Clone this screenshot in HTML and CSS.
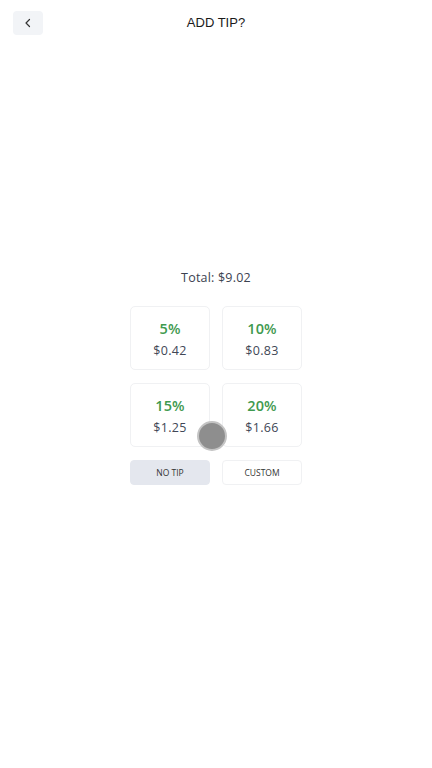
FILE: index.html
```html
<!DOCTYPE html>
<html>
<head>
<meta charset="utf-8">
<link rel="stylesheet" href="styles.css">
</head>
<body>
<header class="topbar">
  <button class="back" aria-label="Back">
    <svg width="10" height="10" viewBox="0 0 10 10"><path d="M6.5 1.5 L3 5 L6.5 8.5" fill="none" stroke="#333" stroke-width="1.2" stroke-linecap="round" stroke-linejoin="round"/></svg>
  </button>
  <h1 class="title">ADD TIP?</h1>
</header>
<main class="content">
  <p class="total">Total: $9.02</p>
  <div class="grid">
    <div class="card"><span class="pct">5%</span><span class="amt">$0.42</span></div>
    <div class="card"><span class="pct">10%</span><span class="amt">$0.83</span></div>
    <div class="card"><span class="pct">15%</span><span class="amt">$1.25</span></div>
    <div class="card"><span class="pct">20%</span><span class="amt">$1.66</span></div>
    <button class="btn btn-notip">NO TIP</button>
    <button class="btn btn-custom">CUSTOM</button>
  </div>
  <div class="touch"></div>
</main>
</body>
</html>
```
FILE: styles.css
```css
* { box-sizing: border-box; }
html, body { margin: 0; padding: 0; background: #fff; }
body {
  width: 432px;
  height: 768px;
  font-family: "Open Sans", "Noto Sans", sans-serif;
  color: #333;
  position: relative;
}
.topbar {
  position: relative;
  height: 46px;
  display: flex;
  align-items: center;
  justify-content: center;
}
.back {
  position: absolute;
  left: 13px;
  top: 11px;
  width: 30px;
  height: 24px;
  border: none;
  border-radius: 4px;
  background: #f2f4f7;
  display: flex;
  align-items: center;
  justify-content: center;
  padding: 0;
}
.title {
  margin: 0;
  font-family: "Liberation Sans", Arial, sans-serif;
  font-weight: 400;
  font-size: 13px;
  color: #1a1a1a;
  position: relative;
  top: -1px;
}
.content {
  display: flex;
  flex-direction: column;
  align-items: center;
  padding-top: 223px;
  position: relative;
}
.total {
  margin: 0;
  font-size: 12.5px;
  line-height: 18px;
  color: #3c4250;
  letter-spacing: 0.2px;
}
.grid {
  margin-top: 19px;
  display: grid;
  grid-template-columns: 80px 80px;
  column-gap: 12px;
  row-gap: 13px;
}
.card {
  height: 64px;
  border: 1px solid #f0f1f3;
  border-radius: 5px;
  display: flex;
  flex-direction: column;
  align-items: center;
  justify-content: center;
  padding-top: 3px;
}
.pct {
  font-size: 14.5px;
  line-height: 20px;
  color: #3f9a4f;
  font-weight: 600;
  letter-spacing: 0.1px;
}
.amt {
  font-size: 12.5px;
  line-height: 18px;
  color: #414756;
  margin-top: 3px;
  letter-spacing: 0.3px;
}
.btn {
  height: 25px;
  border-radius: 4px;
  font-family: "Open Sans", sans-serif;
  font-size: 8.5px;
  color: #333;
  padding: 0;
}
.btn-notip {
  background: #e4e7ee;
  border: 1px solid #e4e7ee;
}
.btn-custom {
  background: #fff;
  border: 1px solid #f0f1f3;
}
.touch {
  position: absolute;
  left: 197px;
  top: 375px;
  width: 30px;
  height: 30px;
  border-radius: 50%;
  background: #8e8e8e;
  border: 2px solid #c4c4c4;
}
```
